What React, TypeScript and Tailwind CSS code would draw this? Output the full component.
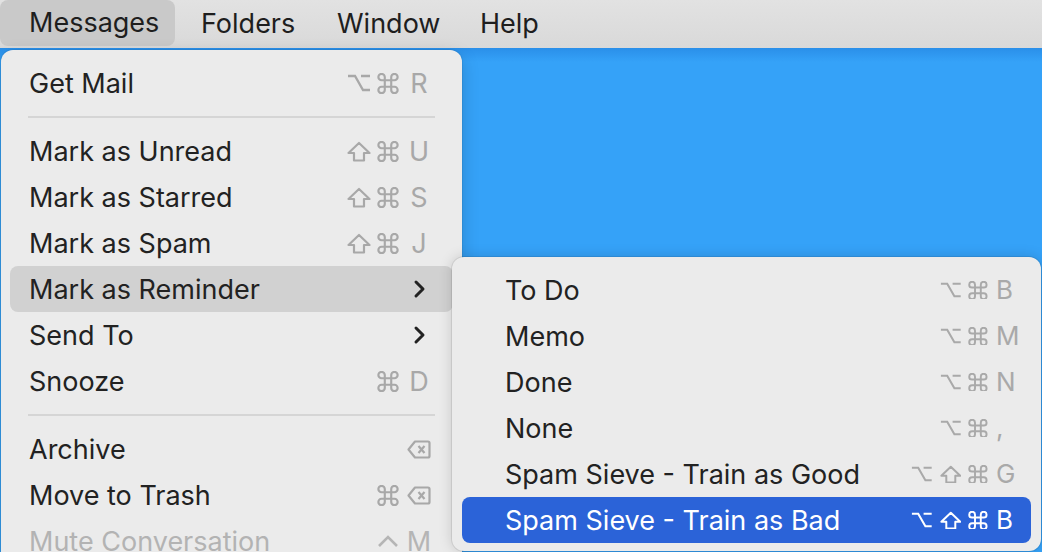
type Mod = 'opt' | 'shift' | 'cmd' | 'ctrl'
type Key = string | 'del' | 'sub'

interface ItemProps {
  label: string
  mods?: Mod[]
  k?: Key
  active?: boolean
  disabled?: boolean
}

function ModIcon({ mod, small }: { mod: Mod; small?: boolean }) {
  const s = small ? 0.9 : 1
  if (mod === 'opt')
    return (
      <svg width={24 * s} height={20 * s} viewBox="0 0 24 20" fill="none" stroke="currentColor" strokeWidth={2.3} strokeLinejoin="miter">
        <path d="M1 3 H8 L16 17 H23 M14 3 H23" />
      </svg>
    )
  if (mod === 'shift')
    return (
      <svg width={24 * s} height={21 * s} viewBox="0 0 24 21" fill="none" stroke="currentColor" strokeWidth={2.2} strokeLinejoin="round">
        <path d="M12 2 L22.5 12 H17 V19.5 H7 V12 H1.5 Z" />
      </svg>
    )
  if (mod === 'ctrl')
    return (
      <svg width={22 * s} height={14 * s} viewBox="0 0 22 14" fill="none" stroke="currentColor" strokeWidth={2.6}>
        <path d="M2 12 L11 3 L20 12" />
      </svg>
    )
  return (
    <svg width={22 * s} height={21 * s} viewBox="2.2 2.2 19.6 19.6" fill="none" stroke="currentColor" strokeWidth={2}>
      <path d="M15 6v12a3 3 0 1 0 3-3H6a3 3 0 1 0 3 3V6a3 3 0 1 0-3 3h12a3 3 0 1 0-3-3" />
    </svg>
  )
}

function DeleteIcon() {
  return (
    <svg width={24} height={19} viewBox="0 0 24 19" fill="none" stroke="currentColor" strokeWidth={2.2} strokeLinejoin="round">
      <path d="M8 1.5 H21 a1.5 1.5 0 0 1 1.5 1.5 V16 a1.5 1.5 0 0 1 -1.5 1.5 H8 L1.5 9.5 Z" />
      <path d="M11.5 6 L17.5 13 M17.5 6 L11.5 13" />
    </svg>
  )
}

function Chevron() {
  return (
    <svg width={14} height={20} viewBox="0 0 14 20" fill="none" stroke="currentColor" strokeWidth={3} strokeLinecap="round" strokeLinejoin="round">
      <path d="M4 3 L11 10 L4 17" />
    </svg>
  )
}

function MainItem({ label, mods = [], k, active, disabled }: ItemProps) {
  const text = disabled ? 'text-[#b3b3b3]' : 'text-[#222222]'
  return (
    <div
      className={`flex h-[46px] items-center justify-between rounded-[8px] pl-[19px] pr-[22px] ${
        active ? 'bg-[#d1d1d1]' : ''
      }`}
    >
      <span className={`text-[27px] leading-none ${text}`}>{label}</span>
      <div className={`flex items-center ${disabled ? 'text-[#b5b5b5]' : 'text-[#a8a8a8]'}`}>
        <div className="flex items-center gap-[6px]">
          {mods.map((m, i) => (
            <ModIcon key={i} mod={m} />
          ))}
        </div>
        {k && (
          <div className="ml-[8px] flex w-[24px] items-center justify-center text-[27px] leading-none">
            {k === 'del' ? <DeleteIcon /> : k === 'sub' ? <span className="text-[#222222]"><Chevron /></span> : k}
          </div>
        )}
      </div>
    </div>
  )
}

function SubItem({ label, mods = [], k, active }: ItemProps) {
  return (
    <div
      className={`flex h-[46px] items-center justify-between rounded-[8px] pl-[43px] pr-[15px] ${
        active ? 'bg-[#2b63d8] text-white' : 'text-[#222222]'
      }`}
    >
      <span className="text-[27px] leading-none">{label}</span>
      <div className={`flex items-center ${active ? 'text-white' : 'text-[#a9a9a9]'}`}>
        <div className="flex items-center gap-[7px]">
          {mods.map((m, i) => (
            <ModIcon key={i} mod={m} small />
          ))}
        </div>
        <div className="ml-[8px] w-[20px] text-left text-[26px] leading-none">{k}</div>
      </div>
    </div>
  )
}

function Separator() {
  return (
    <div className="flex h-[22px] items-center px-[18px]">
      <div className="h-[2px] w-full bg-[#d5d5d5]" />
    </div>
  )
}

function MenuBar() {
  return (
    <div className="flex h-[48px] shrink-0 items-center bg-[linear-gradient(to_bottom,#e2e2e2,#d9d9d9)] text-[27px] text-[#1e1e1e]">
      <div className="flex h-[46px] w-[175px] items-center self-start rounded-[8px] bg-[#c9c9c9] pl-[29px]">Messages</div>
      <div className="w-[141px] pl-[26px]">Folders</div>
      <div className="w-[142px] pl-[21px]">Window</div>
      <div className="pl-[22px]">Help</div>
    </div>
  )
}

export default function App() {
  return (
    <div className="relative flex h-[552px] w-[1042px] flex-col overflow-hidden font-['Inter','Noto_Sans',sans-serif]">
      <MenuBar />
      <div className="flex-1 bg-[linear-gradient(to_bottom,#2a8fe9,#35a2f8_14px)]" />

      <div className="absolute left-[1px] top-[50px] h-[530px] w-[461px] rounded-[12px] bg-[#ebebeb] px-[9px] pt-[10px] shadow-[0_0_0_1px_rgba(0,0,0,0.06),0_6px_18px_rgba(0,0,0,0.18)]">
        <MainItem label="Get Mail" mods={['opt', 'cmd']} k="R" />
        <Separator />
        <MainItem label="Mark as Unread" mods={['shift', 'cmd']} k="U" />
        <MainItem label="Mark as Starred" mods={['shift', 'cmd']} k="S" />
        <MainItem label="Mark as Spam" mods={['shift', 'cmd']} k="J" />
        <MainItem label="Mark as Reminder" k="sub" active />
        <MainItem label="Send To" k="sub" />
        <MainItem label="Snooze" mods={['cmd']} k="D" />
        <Separator />
        <MainItem label="Archive" k="del" />
        <MainItem label="Move to Trash" mods={['cmd']} k="del" />
        <MainItem label="Mute Conversation" mods={['ctrl']} k="M" disabled />
      </div>

      <div className="absolute left-[452px] top-[257px] h-[294px] w-[589px] rounded-[12px] bg-[#ebebeb] px-[10px] pt-[10px] shadow-[0_0_0_1px_rgba(0,0,0,0.08),0_0_14px_rgba(0,0,0,0.16)]">
        <SubItem label="To Do" mods={['opt', 'cmd']} k="B" />
        <SubItem label="Memo" mods={['opt', 'cmd']} k="M" />
        <SubItem label="Done" mods={['opt', 'cmd']} k="N" />
        <SubItem label="None" mods={['opt', 'cmd']} k="," />
        <SubItem label="Spam Sieve - Train as Good" mods={['opt', 'shift', 'cmd']} k="G" />
        <SubItem label="Spam Sieve - Train as Bad" mods={['opt', 'shift', 'cmd']} k="B" active />
      </div>
    </div>
  )
}
